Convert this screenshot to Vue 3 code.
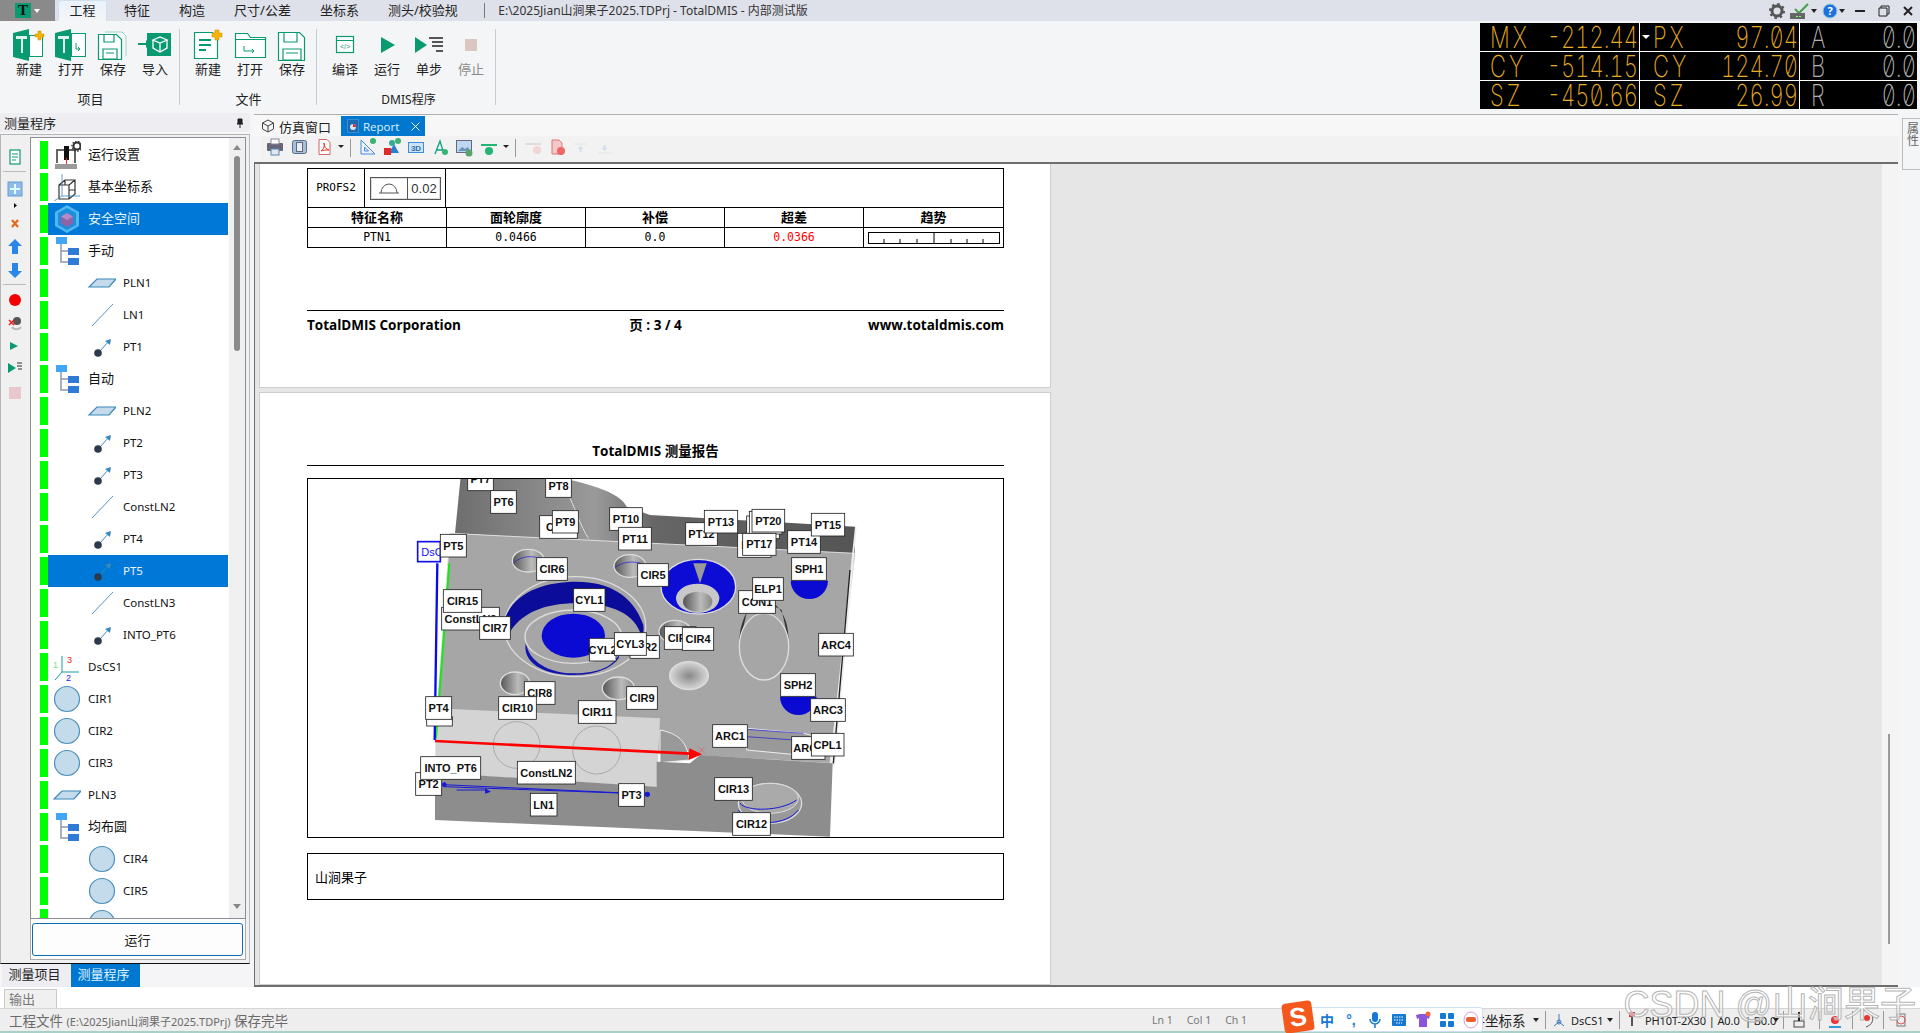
<template>
  <div class="app">
    <!-- title bar -->
    <header class="titlebar">
      <div class="appbtn">
        <span class="applogo">T</span>
        <span class="caret white"></span>
      </div>
      <nav class="menutabs">
        <span v-for="(t, i) in menuTabs" :key="t" class="menutab" :class="{ on: i === 0 }">{{ t }}</span>
      </nav>
      <div class="doctitle">E:\2025Jian山涧果子2025.TDPrj - TotalDMIS - 内部测试版</div>
      <div class="winbtns">
        <svg width="16" height="16" viewBox="0 0 16 16">
          <circle cx="8" cy="8" r="5" fill="none" stroke="#555" stroke-width="3" />
          <circle cx="8" cy="8" r="7" fill="none" stroke="#555" stroke-width="2" stroke-dasharray="2.5 3" />
        </svg>
        <svg width="22" height="18" viewBox="0 0 22 18" class="w-check">
          <path d="M6 7l4 4 9-9" fill="none" stroke="#43a047" stroke-width="2" />
          <rect x="1" y="11" width="15" height="6" fill="#666" />
          <rect x="7" y="14" width="2" height="1" fill="#7f7" />
          <rect x="10" y="14" width="2" height="1" fill="#7f7" />
        </svg>
        <span class="caret"></span>
        <svg width="16" height="16" viewBox="0 0 16 16" class="w-help">
          <circle cx="8" cy="8" r="7" fill="#1e6fe0" stroke="#9cc" />
          <text x="8" y="12" text-anchor="middle" font-size="11" font-weight="700" fill="#fff">?</text>
        </svg>
        <span class="caret w-c2"></span>
        <svg width="12" height="12" viewBox="0 0 12 12" class="w-min"><rect x="1" y="5" width="10" height="2" fill="#222" /></svg>
        <svg width="12" height="12" viewBox="0 0 12 12" class="w-max">
          <path d="M3 3V1h8v8H9M1 3h8v8H1z" fill="none" stroke="#222" />
        </svg>
        <svg width="12" height="12" viewBox="0 0 12 12" class="w-max"><path d="M2 2l8 8M10 2l-8 8" stroke="#222" stroke-width="2" /></svg>
      </div>
    </header>

    <!-- ribbon -->
    <section class="ribbon">
      <div v-for="g in ribbonGroups" :key="g.title" class="rb-group" :class="g.cls">
        <div class="rb-btns">
          <div v-for="b in g.items" :key="b.label + b.icon" class="rb-btn" :class="{ off: b.off }">
            <svg width="34" height="32" viewBox="0 0 34 32" v-html="ribbonIcons[b.icon]"></svg>
            <span>{{ b.label }}</span>
          </div>
        </div>
        <div class="rb-title">{{ g.title }}</div>
      </div>

      <div class="led">
        <div v-for="(row, r) in ledRows" :key="r" class="led-row">
          <div v-for="(c, i) in row" :key="c[0]" class="led-cell" :class="{ dim: i === 2, mid: i === 1, last: i === 2 }">
            <span class="led-label">{{ c[0] }}</span>
            <span class="led-value">{{ c[1] }}</span>
          </div>
        </div>
        <span class="led-tri"></span>
      </div>
    </section>

    <!-- middle -->
    <section class="middle">
      <aside class="leftpanel">
        <div class="lp-head">
          <span>测量程序</span>
          <svg width="10" height="10" viewBox="0 0 10 10"><path d="M3 1h4v4l1 1H2l1-1zM5 6v4" fill="#222" stroke="#222" /></svg>
        </div>
        <div class="lp-body">
          <svg class="strip" width="29" height="280" viewBox="1 135 29 280">
            <rect x="10" y="150" width="10" height="14" fill="#fff" stroke="#0a9a72" stroke-width="1.2" />
            <path d="M12 154h6M12 157h6M12 160h4" stroke="#0a9a72" />
            <path d="M3 171.5h23" stroke="#bbb" />
            <rect x="8" y="182" width="14" height="14" fill="#8fbbe8" stroke="#6a9bd0" />
            <path d="M15 184v10M10 189h10" stroke="#dff" stroke-width="2" />
            <path d="M14 203l3 2.500-3 2.500z" fill="#111" />
            <path d="M12 220l6 7M18 220l-6 7" stroke="#e8661a" stroke-width="2.200" />
            <path d="M15 239l7 7h-4v8h-6v-8H8z" fill="#2a86e8" />
            <path d="M15 278l7-7h-4v-8h-6v8H8z" fill="#2a86e8" />
            <path d="M3 284.500h23" stroke="#bbb" />
            <circle cx="15" cy="300" r="6" fill="#f40000" />
            <circle cx="17" cy="321" r="4" fill="#555" />
            <path d="M12 327a5 4 0 0 0 9 0" stroke="#bbb" stroke-width="2" fill="none" />
            <path d="M9 320l5 5M14 320l-5 5" stroke="#e22" stroke-width="1.600" />
            <path d="M10 342l8 4-8 4z" fill="#0a9a72" />
            <path d="M8 363l8 5-8 5z" fill="#0a9a72" />
            <path d="M17 363h5M17 366h5M18 369h4" stroke="#333" />
            <rect x="9" y="387" width="12" height="12" fill="#e8c8cc" />
          </svg>
          <div class="lp-right">
            <div class="tree">
              <div class="tree-rows">
                <div v-for="n in treeRows" :key="n.text" class="t-row" :class="{ sel: n.sel, child: n.lvl }">
                  <span class="t-state"></span>
                  <span class="t-main">
                    <svg class="t-icon" width="28" height="28" viewBox="0 0 28 28" v-html="treeIcons[n.icon]"></svg>
                    <span class="t-text" :class="isLatin(n.text) ? 'latin' : 'zh'">{{ n.text }}</span>
                  </span>
                </div>
              </div>
              <div class="tree-scroll">
                <span class="arr up"></span>
                <span class="thumb"></span>
                <span class="arr down"></span>
              </div>
            </div>
            <div class="runframe"><button class="runbtn">运行</button></div>
          </div>
        </div>
        <div class="lp-tabs">
          <span class="lp-tab">测量项目</span>
          <span class="lp-tab on">测量程序</span>
        </div>
      </aside>

      <main class="maincol">
        <div class="doctabs">
          <span class="doctab">
            <svg width="14" height="14" viewBox="0 0 14 14"><path d="M7 1l5.500 3v6L7 13l-5.500-3V4zM1.500 4L7 7l5.500-3M7 7v6" fill="none" stroke="#444" /></svg>
            仿真窗口
          </span>
          <span class="doctab on">
            <svg width="12" height="14" viewBox="0 0 12 14"><rect x=".5" y=".5" width="11" height="13" fill="#1c6bb0" stroke="#3a8ccc" /><circle cx="6" cy="8" r="3" fill="#d9e4ee" /><path d="M6 8V5a3 3 0 0 1 3 3z" fill="#e23" /></svg>
            Report
            <svg class="x" width="9" height="9" viewBox="0 0 9 9"><path d="M.5.500l8 8M8.500.500l-8 8" stroke="#fff" /></svg>
          </span>
        </div>
        <div class="doctools">
          <svg width="360" height="24" viewBox="262 138 360 24">
            <rect x="267" y="145" width="16" height="8" rx="1" fill="#667" />
            <rect x="271" y="141" width="8" height="5" fill="#fff" stroke="#889" />
            <rect x="271" y="151" width="8" height="6" fill="#dfe8f0" stroke="#5a87b0" />
            <rect x="292.500" y="142.500" width="14" height="13" rx="2" fill="#a9bfd8" stroke="#5a6f8a" />
            <rect x="296.500" y="144.500" width="6" height="9" fill="#e8eef5" stroke="#667" />
            <path d="M319 141.500h8l3 3v12h-11z" fill="#fff" stroke="#c66" />
            <path d="M321 153c3-2 4-6 3-8 0 4 2 6 5 7-3 0-6 0-8 1z" fill="none" stroke="#d32" />
            <path d="M338 147h6l-3 3z" fill="#222" />
            <path d="M350.500 141v18" stroke="#999" />
            <path d="M361 142v14h14zM364.500 149v4h4z" fill="none" stroke="#3c8ce0" />
            <circle cx="373" cy="143" r="3" fill="#3bb273" />
            <path d="M394 146l5 9h-10z" fill="#2a7fd0" />
            <rect x="384" y="150" width="7" height="7" fill="#e02a2a" />
            <circle cx="392" cy="145" r="3" fill="#3a9" />
            <circle cx="398" cy="143" r="3" fill="#3bb273" />
            <rect x="408.500" y="144.500" width="15" height="10" fill="#cfe3f3" stroke="#3c8ce0" />
            <text x="416" y="153" font-size="8" font-weight="700" fill="#2e6fb0" text-anchor="middle" font-family="Liberation Sans">3D</text>
            <path d="M435 156l5-13 4 13M437 152h5" fill="none" stroke="#0aa37f" stroke-width="1.300" />
            <circle cx="445" cy="154" r="3" fill="#3bb273" />
            <rect x="456.500" y="142.500" width="15" height="12" fill="#bcd7ee" stroke="#668" />
            <path d="M458 153l4-4 3 2 3-2 2 4z" fill="#6a93b8" />
            <circle cx="469" cy="155" r="3.500" fill="#5aa36d" />
            <path d="M481 147h16" stroke="#22b573" stroke-width="2" />
            <circle cx="489" cy="153" r="4" fill="#22b573" />
            <path d="M503 147h6l-3 3z" fill="#222" />
            <path d="M515.500 141v18" stroke="#999" />
            <path d="M525 146h16" stroke="#e0dcdc" stroke-width="2" />
            <circle cx="537" cy="152" r="4" fill="#f3d4d4" />
            <path d="M552 142h7l3 3v11h-10z" fill="#f4c9c9" stroke="#d77" />
            <circle cx="561" cy="153" r="4" fill="#e66" />
            <path d="M574 146h13" stroke="#e4e4e4" />
            <path d="M580.500 148l3 3h-2v3h-2v-3h-2z" fill="#d0dff0" />
            <path d="M598 155h14" stroke="#e4e4e4" />
            <path d="M604.500 153l3-3h-2v-3h-2v3h-2z" fill="#d0dff0" />
          </svg>
        </div>
        <div class="content">
          <div class="pages">
            <article class="page first">
              <div class="rtable">
                <div class="r-top">
                  <div class="r-name">PROFS2</div>
                  <div class="r-frame-cell">
                    <div class="r-frame">
                      <span class="r-sym">
                        <svg width="28" height="16" viewBox="0 0 28 16"><path d="M4 13h20M6 13a8 9 0 0 1 16 0" fill="none" stroke="#555" /></svg>
                      </span>
                      <span class="r-tol">0.02</span>
                    </div>
                  </div>
                </div>
                <div class="r-grid head">
                  <span v-for="h in reportHead" :key="h">{{ h }}</span>
                </div>
                <div class="r-grid data">
                  <span>PTN1</span>
                  <span>0.0466</span>
                  <span>0.0</span>
                  <span class="bad">0.0366</span>
                  <span class="trend">
                    <svg width="132" height="12" viewBox="0 0 132 12">
                      <rect x=".5" y=".5" width="131" height="11" fill="#fff" stroke="#000" />
                      <path d="M66 1v10M16 7v4M32 7v4M49 7v4M83 7v4M99 7v4M115 7v4" stroke="#000" />
                    </svg>
                  </span>
                </div>
              </div>
              <div class="r-foot">
                <span>TotalDMIS Corporation</span>
                <span class="pageno">页 : 3 / 4</span>
                <span>www.totaldmis.com</span>
              </div>
            </article>

            <article class="page second">
              <h2 class="r-title">TotalDMIS 测量报告</h2>
              <div class="shot">
                <svg width="694" height="358" viewBox="-276 27 2082 1074" class="shot-svg">
                  <defs>
                    <linearGradient id="wall" x1="0" x2="1" y1="0" y2="0">
                      <stop offset="0" stop-color="#6e6e6e" />
                      <stop offset=".35" stop-color="#9a9a9a" />
                      <stop offset=".5" stop-color="#666" />
                      <stop offset="1" stop-color="#555" />
                    </linearGradient>
                    <linearGradient id="hole" x1="0" x2="1" y1="0" y2="0">
                      <stop offset="0" stop-color="#555" />
                      <stop offset=".6" stop-color="#bbb" />
                      <stop offset="1" stop-color="#888" />
                    </linearGradient>
                    <radialGradient id="dimple">
                      <stop offset="0" stop-color="#888" />
                      <stop offset="1" stop-color="#d8d8d8" />
                    </radialGradient>
                  </defs>
                  <!-- back wall -->
                  <path d="M182 20h280c110 20 200 50 218 90l70 25 615 35v90L165 190z" fill="url(#wall)" />
                  <path d="M510 85c20 40 30 80 55 120" fill="none" stroke="#ddd" stroke-width="3" />
                  <!-- top plate -->
                  <path d="M150 190l1215 60-75 630-1185-70z" fill="#a6a6a6" stroke="#ddd" stroke-width="3" />
                  <path d="M1365 170l-75 710 15 10 65-720z" fill="#eee" />
                  <path d="M1350 300l-50 580" stroke="#222" stroke-width="4" />
                  <!-- light step -->
                  <path d="M108 715l672 30-10 205-665-40z" fill="#d4d4d4" />
                  <ellipse cx="350" cy="825" rx="70" ry="70" fill="none" stroke="#aaa" stroke-width="3" />
                  <ellipse cx="590" cy="840" rx="72" ry="72" fill="none" stroke="#aaa" stroke-width="3" />
                  <path d="M780 780c50 10 80 30 88 90l-88 8z" fill="#999" stroke="#eee" stroke-width="3" />
                  <!-- lower block -->
                  <path d="M105 908l665 42 0-75 100 5 30-25 398 25-8 220-1185-50z" fill="#8d8d8d" />
                  <!-- top holes -->
                  <ellipse cx="385" cy="272" rx="48" ry="34" fill="url(#hole)" stroke="#ddd" stroke-width="4" />
                  <path d="M340 280c20-20 50-25 80-15" fill="none" stroke="#1818d8" stroke-width="2" />
                  <ellipse cx="690" cy="288" rx="48" ry="34" fill="url(#hole)" stroke="#ddd" stroke-width="4" />
                  <path d="M645 292c20-15 50-20 80-12" fill="none" stroke="#1818d8" stroke-width="2" />
                  <ellipse cx="345" cy="640" rx="44" ry="34" fill="url(#hole)" stroke="#ddd" stroke-width="4" />
                  <ellipse cx="655" cy="655" rx="48" ry="34" fill="url(#hole)" stroke="#ddd" stroke-width="4" />
                  <ellipse cx="825" cy="485" rx="48" ry="34" fill="url(#hole)" stroke="#ddd" stroke-width="4" />
                  <!-- big counterbore -->
                  <ellipse cx="525" cy="470" rx="212" ry="150" fill="#a6a6a6" stroke="#ddd" stroke-width="4" />
                  <path d="M315 445c30-80 120-110 215-110s170 40 200 130c2 20 0 30-5 35-20-70-90-100-195-100-100 0-170 30-205 95z" fill="#0c0c9a" />
                  <path d="M378 515c5 60 70 95 145 95 70 0 120-20 135-60l-2 15c-25 35-80 50-135 50-80 0-145-30-145-85z" fill="#1212b0" />
                  <ellipse cx="520" cy="500" rx="145" ry="80" fill="#a6a6a6" stroke="#ddd" stroke-width="4" />
                  <ellipse cx="520" cy="497" rx="95" ry="66" fill="#0a0ad2" />
                  <!-- cone -->
                  <ellipse cx="895" cy="350" rx="112" ry="82" fill="#0c0cd4" stroke="#ddd" stroke-width="4" />
                  <path d="M880 280l40 0-20 60z" fill="#9a9a9a" />
                  <ellipse cx="893" cy="385" rx="65" ry="44" fill="#c8c8c8" />
                  <ellipse cx="893" cy="395" rx="44" ry="30" fill="url(#hole)" />
                  <!-- slot -->
                  <path d="M1018 520c0-80 40-130 75-130s75 50 72 120l-20-90c-30-20-80-20-105 10z" fill="#333" />
                  <ellipse cx="1092" cy="530" rx="74" ry="100" fill="#a6a6a6" stroke="#ddd" stroke-width="4" />
                  <ellipse cx="867" cy="617" rx="58" ry="42" fill="url(#dimple)" stroke="#ddd" stroke-width="4" />
                  <path d="M1172 332h112c0 30-25 55-56 55s-56-25-56-55z" fill="#0a0ad2" />
                  <path d="M1140 680h110c0 30-25 55-55 55s-55-25-55-55z" fill="#0a0ad2" />
                  <!-- lower counterbores -->
                  <ellipse cx="1110" cy="1000" rx="95" ry="60" fill="#999" stroke="#ddd" stroke-width="4" />
                  <ellipse cx="1110" cy="985" rx="85" ry="45" fill="#aaa" stroke="#ddd" stroke-width="3" />
                  <path d="M1020 1000c20 25 120 25 170-10M1015 1020c40 50 140 50 180 0" fill="none" stroke="#1818d8" stroke-width="3" />
                  <path d="M1040 775l170 15 40 10v60l-210-20z" fill="#999" stroke="#eee" stroke-width="3" />
                  <path d="M1040 778l170 12M1040 800l170 12" stroke="#1818d8" stroke-width="2" />
                  <!-- axes and scan lines -->
                  <path d="M148 280L108 805" stroke="#18e818" stroke-width="6" />
                  <path d="M112 280L104 810" stroke="#0a0af0" stroke-width="7" />
                  <path d="M105 813L870 851" stroke="#f00" stroke-width="8" />
                  <path d="M868 835l38 18-40 17z" fill="#f00" />
                  <path d="M895 830l20 20M915 830l-20 20" stroke="#e55" stroke-width="2" />
                  <path d="M130 944l610 28M130 950l610 22M170 960h90" stroke="#1818d8" stroke-width="3" />
                  <circle cx="133" cy="944" r="7" fill="#1818d8" />
                  <circle cx="742" cy="973" r="8" fill="#1818d8" />
                  <path d="M255 955l18 10-18 6z" fill="#1818d8" />
                  <!-- labels -->
                  <g v-for="l in shotLabels" :key="l[0] + l[1]">
                    <rect :x="l[1]" :y="l[2]" :width="l[3]" :height="l[4]" fill="#fff" stroke="#222" stroke-width="2.500" />
                    <text :x="l[1] + l[3] / 2" :y="l[2] + l[4] / 2 + 12" text-anchor="middle" class="shot-label">{{ l[0] }}</text>
                  </g>
                  <rect x="53" y="215" width="68" height="60" fill="#fff" stroke="#1010f0" stroke-width="5" />
                  <text x="64" y="258" class="shot-label blue">DsC</text>
                  <rect x="121" y="193" width="78" height="68" fill="#fff" stroke="#222" stroke-width="2.500" />
                  <text x="160" y="239" text-anchor="middle" class="shot-label">PT5</text>
                </svg>
              </div>
              <div class="r-note">山涧果子</div>
            </article>
          </div>
          <div class="greyfill"></div>
          <div class="vscroll"><span></span></div>
        </div>
      </main>

      <div class="rightstrip"><span>属性</span></div>
    </section>

    <!-- output row + status -->
    <div class="outrow"><span class="outtab">输出</span></div>
    <footer class="status">
      <div class="st-msg">工程文件 <small>(E:\2025Jian山涧果子2025.TDPrj)</small> 保存完毕</div>
      <div class="st-pos"><span>Ln 1</span><span>Col 1</span><span>Ch 1</span></div>
      <div class="st-right">
        <span class="st-cs">工件坐标系</span>
        <span class="caret m7"></span>
        <i class="st-sep m6"></i>
        <svg class="m6" width="14" height="16" viewBox="0 0 14 16"><path d="M7 2v8M7 10L2 14M7 10l5 4" stroke="#3c78b8" fill="none" /><circle cx="7" cy="10" r="2" fill="none" stroke="#3c78b8" /></svg>
        <span class="st-t st-cs1 m5">DsCS1</span>
        <span class="caret m5"></span>
        <i class="st-sep m6"></i>
        <svg class="m7" width="10" height="18" viewBox="0 0 10 18"><rect x="2" y="1" width="6" height="5" fill="#c33" /><path d="M5 6v9" stroke="#555" stroke-width="2" /></svg>
        <span class="st-t st-probe m8">PH10T-2X30 | A0.0 &nbsp;| B0.0</span>
        <span class="caret m4"></span>
        <i class="st-sep m4"></i>
        <svg class="m8" width="14" height="18" viewBox="0 0 14 18"><rect x="2" y="10" width="10" height="6" fill="none" stroke="#444" /><path d="M7 1v9" stroke="#222" stroke-width="2" /></svg>
        <i class="st-sep m13"></i>
        <svg class="m8" width="14" height="18" viewBox="0 0 14 18"><circle cx="7" cy="9" r="4" fill="#e33" /><path d="M1 16h12" stroke="#39d" stroke-width="2" /></svg>
        <i class="st-sep m10"></i>
        <svg class="m8" width="14" height="18" viewBox="0 0 14 18"><circle cx="6" cy="7" r="3" fill="#e33" /><path d="M11 4c2 5 0 10-6 12" stroke="#555" fill="none" /></svg>
        <i class="st-sep m8"></i>
        <svg class="m10" width="14" height="18" viewBox="0 0 14 18"><rect x="3" y="3" width="8" height="12" fill="none" stroke="#777" /><circle cx="7" cy="9" r="4" fill="none" stroke="#d55" /></svg>
      </div>
    </footer>

    <!-- floating input method bar -->
    <div class="ime">
      <span class="ime-logo">S</span>
      <span class="ime-zh">中</span>
      <span class="ime-punc">°,</span>
      <svg width="12" height="18" viewBox="0 0 12 18"><rect x="3" y="1" width="6" height="10" rx="3" fill="#1478d4" /><path d="M1 8a5 5 0 0 0 10 0M6 13v4" fill="none" stroke="#1478d4" stroke-width="1.500" /></svg>
      <svg width="14" height="14" viewBox="0 0 14 14"><rect width="14" height="12" y="1" rx="1" fill="#1478d4" /><path d="M2 4h10M2 7h10M4 10h6" stroke="#fff" stroke-dasharray="1.500 1" /></svg>
      <svg width="16" height="18" viewBox="0 0 16 18"><path d="M1 4l4-1h6l4 1-1 4-2-1v9H4V7L2 8z" fill="#8a55d8" /><circle cx="13" cy="3" r="2.500" fill="#f2643c" /></svg>
      <svg width="14" height="14" viewBox="0 0 14 14"><rect width="6" height="6" rx="1" fill="#1478d4" /><rect x="8" width="6" height="6" rx="1" fill="#1478d4" /><rect y="8" width="6" height="6" rx="1" fill="#1478d4" /><rect x="8" y="8" width="6" height="6" rx="1" fill="#1478d4" /></svg>
      <svg width="16" height="20" viewBox="0 0 16 20"><ellipse cx="8" cy="10" rx="7" ry="8" fill="#fff" stroke="#d99ae0" /><rect x="3" y="7" width="10" height="5" rx="2" fill="#e8602c" /></svg>
    </div>

    <div class="watermark">CSDN @山涧果子</div>
  </div>
</template>

<script setup>
const menuTabs = ["工程", "特征", "构造", "尺寸/公差", "坐标系", "测头/校验规"];

const ribbonGroups = [
  {
    title: "项目",
    cls: "g1",
    items: [
      { label: "新建", icon: "projNew" },
      { label: "打开", icon: "projOpen" },
      { label: "保存", icon: "saveAll" },
      { label: "导入", icon: "import" },
    ],
  },
  {
    title: "文件",
    cls: "g2",
    items: [
      { label: "新建", icon: "fileNew" },
      { label: "打开", icon: "fileOpen" },
      { label: "保存", icon: "fileSave" },
    ],
  },
  {
    title: "DMIS程序",
    cls: "g3",
    items: [
      { label: "编译", icon: "compile" },
      { label: "运行", icon: "run" },
      { label: "单步", icon: "step" },
      { label: "停止", icon: "stop", off: true },
    ],
  },
];

const G = "#0a9a72";
const tBook =
  `<path d="M1 4L17 0v32L1 28z" fill="${G}"/>` +
  `<path d="M4 7h11v3h-4v14H9V10H4z" fill="#dff3ec"/>`;

const ribbonIcons = {
  projNew:
    tBook +
    `<rect x="17.500" y="6.500" width="13" height="21" fill="#fff" stroke="${G}"/>` +
    `<path d="M26 2h3v3h3v3h-3v3h-3V8h-3V5h3z" fill="#f4b400" stroke="#c98a00" stroke-width=".5"/>`,
  projOpen:
    tBook +
    `<rect x="17.500" y="4.500" width="14" height="23" fill="#fff" stroke="${G}"/>` +
    `<path d="M22 14v6h4M24 18l2 2-2 2" fill="none" stroke="${G}"/>`,
  saveAll:
    `<path d="M9 3h17l4 4v20" fill="none" stroke="#9fd8c6"/>` +
    `<path d="M2.500 5.500h18l5 5v20h-23z" fill="#fff" stroke="${G}" stroke-width="1.200"/>` +
    `<path d="M8 6v7h10V6M7 20h14v10H7zM10 24h8" fill="none" stroke="${G}" stroke-width="1.200"/>`,
  import:
    `<path d="M0 15h8" stroke="${G}" stroke-width="2"/><path d="M8 11l5 4-5 4z" fill="${G}"/>` +
    `<rect x="9" y="4" width="24" height="23" fill="${G}"/>` +
    `<path d="M15 11l7-3 7 3-7 3zM15 11v8l7 4 7-4v-8M22 14v9" fill="none" stroke="#fff" stroke-width="1.300"/>`,
  fileNew:
    `<path d="M3.500 3.500h18l5 5v21h-23z" fill="#fff" stroke="${G}" stroke-width="1.200"/>` +
    `<path d="M8 11h12M8 16h12M8 21h7" stroke="${G}" stroke-width="2"/>` +
    `<path d="M24 1h4v3h3v4h-3v3h-4V8h-3V4h3z" fill="#f4b400" stroke="#c98a00" stroke-width=".5"/>`,
  fileOpen:
    `<path d="M2.500 28.500V4.500h12l3 4h15v20z" fill="#fff" stroke="${G}" stroke-width="1.200"/>` +
    `<path d="M2.500 10.500h30" stroke="${G}"/><path d="M11 17v5h10M19 20l2 2-2 2" fill="none" stroke="${G}"/>`,
  fileSave:
    `<path d="M3.500 3.500h21l5 5v23h-26z" fill="#fff" stroke="${G}" stroke-width="1.200"/>` +
    `<path d="M9 4v9h13V4M8 20h18v11H8zM11 24h12" fill="none" stroke="${G}" stroke-width="1.200"/>`,
  compile:
    `<rect x="8.500" y="7.500" width="17" height="16" fill="#fff" stroke="${G}" stroke-width="1.200"/>` +
    `<path d="M8.500 11.500h17" stroke="${G}"/>` +
    `<text x="17" y="20" font-size="7" text-anchor="middle" fill="${G}" font-family="Liberation Sans">&lt;/&gt;</text>`,
  run: `<path d="M11 8l14 8-14 8z" fill="${G}"/>`,
  step:
    `<path d="M3 8l12 8-12 8z" fill="${G}"/>` +
    `<path d="M17 9h14M20 13h11M20 17h11M24 22h7" stroke="#555" stroke-width="1.800"/>`,
  stop: `<rect x="11" y="10" width="12" height="12" fill="#dcc6c4"/>`,
};

const T = "#3b88b9";
const treeIcons = {
  settings:
    `<path d="M3 8h20v14H21V10H5v12H3z" fill="#666"/><rect x="11" y="5" width="5" height="14" fill="#111"/>` +
    `<path d="M13.500 17v6" stroke="#e33"/><rect x="2" y="23" width="22" height="5" fill="#999"/>` +
    `<circle cx="24" cy="5" r="3.500" fill="none" stroke="#333" stroke-width="2"/><circle cx="24" cy="5" r="5" fill="none" stroke="#333" stroke-width="1.500" stroke-dasharray="1.500 1.500"/>`,
  base:
    `<path d="M6 12l6-5h10v14l-6 5H6zM6 12h10v14M16 12l6-5M12 7v5" fill="none" stroke="#333" stroke-width="1.200"/>` +
    `<path d="M16 17h6" stroke="#333"/><path d="M9 1v22L1 28M9 23h18" fill="none" stroke="${T}" stroke-width=".8"/>`,
  safe:
    `<path d="M14 0l12 7v14l-12 7-12-7V7z" fill="#4fb8f0"/><path d="M14 3l9 5v12l-9 5-9-5V8z" fill="#1c8edc"/>` +
    `<path d="M14 8l6 3.500v7L14 22l-6-3.500v-7z" fill="#8e63a8"/><path d="M14 8l6 3.500-6 3.500-6-3.500z" fill="#b58ac9"/>`,
  group:
    `<rect x="3" y="0" width="11" height="7" fill="#42a5f5"/><path d="M8 7v18h7M8 14h7" fill="none" stroke="#8d99a6" stroke-width="1.500"/>` +
    `<rect x="15" y="11" width="11" height="7" fill="#2f7ad6"/><rect x="15" y="21" width="11" height="7" fill="#2f7ad6"/>`,
  plane: `<path d="M1 18l8-8h19l-7 8z" fill="#c3dbea" stroke="${T}" stroke-width="1.200"/>`,
  line: `<path d="M4 25L25 3" stroke="${T}" stroke-width=".9"/>`,
  point:
    `<path d="M11 19L21 8" stroke="${T}" stroke-width="1"/><path d="M23 6l-1 6-5-4z" fill="${T}"/>` +
    `<circle cx="10" cy="20" r="3.800" fill="#2b3a4a"/>`,
  dcs:
    `<path d="M9 3v16M9 19h17M9 19l-7 8" stroke="#1a9a9a" fill="none"/>` +
    `<text x="14" y="10" font-size="9" fill="#e22" font-family="Liberation Sans">3</text>` +
    `<text x="0" y="15" font-size="9" fill="#7de07d" font-family="Liberation Sans">1</text>` +
    `<text x="13" y="28" font-size="9" fill="#22d" font-family="Liberation Sans">2</text>`,
  circle: `<circle cx="14" cy="14" r="12.500" fill="#c3dbea" stroke="#4a8fbe" stroke-width="1.200"/>`,
};

const treeRows = [
  { text: "运行设置", icon: "settings" },
  { text: "基本坐标系", icon: "base" },
  { text: "安全空间", icon: "safe", sel: true },
  { text: "手动", icon: "group" },
  { text: "PLN1", icon: "plane", lvl: 1 },
  { text: "LN1", icon: "line", lvl: 1 },
  { text: "PT1", icon: "point", lvl: 1 },
  { text: "自动", icon: "group" },
  { text: "PLN2", icon: "plane", lvl: 1 },
  { text: "PT2", icon: "point", lvl: 1 },
  { text: "PT3", icon: "point", lvl: 1 },
  { text: "ConstLN2", icon: "line", lvl: 1 },
  { text: "PT4", icon: "point", lvl: 1 },
  { text: "PT5", icon: "point", lvl: 1, sel: true },
  { text: "ConstLN3", icon: "line", lvl: 1 },
  { text: "INTO_PT6", icon: "point", lvl: 1 },
  { text: "DsCS1", icon: "dcs" },
  { text: "CIR1", icon: "circle" },
  { text: "CIR2", icon: "circle" },
  { text: "CIR3", icon: "circle" },
  { text: "PLN3", icon: "plane" },
  { text: "均布圆", icon: "group" },
  { text: "CIR4", icon: "circle", lvl: 1 },
  { text: "CIR5", icon: "circle", lvl: 1 },
  { text: "CIR6", icon: "circle", lvl: 1 },
];

const isLatin = (s) => /^[A-Za-z]/.test(s);

const ledRows = [
  [["MX", "-212.44"], ["PX", "97.04"], ["A", "0.0"]],
  [["CY", "-514.15"], ["CY", "124.70"], ["B", "0.0"]],
  [["SZ", "-450.66"], ["SZ", "26.99"], ["R", "0.0"]],
];

const reportHead = ["特征名称", "面轮廓度", "补偿", "超差", "趋势"];

// name, x, y, w, h in the drawing's own units, back to front
const shotLabels = [
  ["PT7", 203, -6, 77, 68],
  ["PT6", 272, 62, 77, 68],
  ["PT8", 437, 15, 77, 67],
  ["CIR1", 419, 137, 113, 68],
  ["PT9", 457, 122, 78, 67],
  ["PT10", 629, 113, 98, 68],
  ["PT11", 656, 172, 98, 68],
  ["PT12", 857, 158, 95, 68],
  ["PT13", 913, 121, 100, 68],
  ["PT18", 1040, 138, 98, 68],
  ["PT19", 1048, 124, 98, 68],
  ["PT20", 1056, 118, 98, 68],
  ["PT16", 1013, 190, 100, 72],
  ["PT17", 1028, 190, 100, 66],
  ["PT14", 1163, 182, 98, 68],
  ["PT15", 1234, 130, 100, 68],
  ["SPH1", 1175, 263, 104, 68],
  ["CIR6", 410, 263, 92, 68],
  ["CIR5", 713, 281, 92, 68],
  ["CYL1", 521, 356, 94, 68],
  ["CON1", 1016, 362, 110, 68],
  ["ELP1", 1058, 323, 92, 68],
  ["ConstLN3", 125, 412, 173, 68],
  ["CIR15", 130, 359, 115, 68],
  ["CIR7", 239, 440, 92, 68],
  ["CIR3", 793, 470, 95, 68],
  ["CIR4", 847, 473, 94, 68],
  ["CYL2", 568, 505, 80, 68],
  ["CIR2", 690, 497, 88, 68],
  ["CYL3", 643, 488, 96, 68],
  ["ARC4", 1256, 490, 104, 68],
  ["SPH2", 1142, 611, 104, 68],
  ["ARC3", 1232, 686, 104, 68],
  ["CIR8", 373, 635, 92, 68],
  ["CIR9", 680, 650, 92, 68],
  ["CIR10", 296, 680, 113, 68],
  ["CIR11", 535, 692, 113, 68],
  ["", 80, 740, 77, 28],
  ["PT4", 77, 680, 78, 68],
  ["ARC1", 938, 764, 104, 68],
  ["ARC2", 1175, 800, 100, 68],
  ["CPL1", 1234, 790, 98, 68],
  ["PT2", 47, 908, 78, 68],
  ["INTO_PT6", 62, 860, 180, 68],
  ["ConstLN2", 352, 874, 174, 68],
  ["PT3", 656, 941, 77, 68],
  ["LN1", 391, 970, 80, 68],
  ["CIR12", 998, 1028, 113, 68],
  ["CIR13", 944, 923, 113, 68],
];
</script>

<style>
html,
body {
  margin: 0;
  overflow: hidden;
  background: #fff;
}
</style>

<style scoped>
.app {
  position: relative;
  width: 1920px;
  height: 1033px;
  display: flex;
  flex-direction: column;
  overflow: hidden;
  background: #f4f5f7;
  color: #222;
  font-family: "Noto Sans", "Noto Sans CJK SC", sans-serif;
  font-size: 13px;
}

/* title bar */
.titlebar {
  height: 21px;
  flex: none;
  display: flex;
  align-items: center;
  background: #dfe1ea;
}
.appbtn {
  width: 55px;
  height: 21px;
  background: #8a8a8a;
  display: flex;
  align-items: center;
  padding-left: 15px;
  box-sizing: border-box;
  gap: 3px;
}
.applogo {
  width: 16px;
  height: 15px;
  background: #0a9a72;
  color: #111;
  font: 700 15px/15px "Liberation Serif", serif;
  text-align: center;
}
.caret {
  flex: none;
  width: 0;
  height: 0;
  border: 3.500px solid transparent;
  border-top: 4px solid #222;
  border-bottom: 0;
}
.caret.white {
  border-top-color: #fff;
}
.menutabs {
  display: flex;
  height: 21px;
  margin-left: 3px;
}
.menutab {
  padding: 0 14.500px;
  line-height: 21px;
  white-space: nowrap;
}
.menutab.on {
  padding: 0 11.500px;
  margin-right: 2.500px;
  background: linear-gradient(#e9f2fb, #f4f5f7);
  border-radius: 3px 3px 0 0;
  box-shadow: inset 1px 1px 0 #cfe0f0, inset -1px 0 0 #cfe0f0;
}
.doctitle {
  margin-left: 12px;
  padding-left: 13px;
  border-left: 1px solid #777;
  font-size: 12px;
  line-height: 15px;
  color: #333;
  white-space: nowrap;
}
.winbtns {
  margin-left: auto;
  display: flex;
  align-items: center;
  height: 21px;
  padding-right: 6px;
}
.w-check {
  margin-left: 4px;
}
.w-help {
  margin-left: 5px;
}
.w-c2 {
  margin-left: 1px;
}
.w-min {
  margin-left: 9px;
}
.w-max {
  margin-left: 12px;
}

/* ribbon */
.ribbon {
  height: 92px;
  flex: none;
  display: flex;
  align-items: flex-start;
  box-sizing: border-box;
  padding-top: 8px;
}
.rb-group {
  border-right: 1px solid #c3ccd6;
  height: 76px;
  box-sizing: border-box;
}
.rb-group.g1 {
  margin-left: 8px;
  width: 172px;
}
.rb-group.g2 {
  width: 137px;
  padding-left: 7px;
}
.rb-group.g3 {
  width: 179px;
  padding-left: 7px;
}
.rb-btns {
  display: flex;
  height: 62px;
}
.rb-btn {
  width: 42px;
  display: flex;
  flex-direction: column;
  align-items: center;
  font-size: 13px;
  line-height: 17px;
  color: #222;
}
.rb-btn svg {
  flex: none;
}
.rb-btn.off {
  color: #8a8a8a;
}
.rb-title {
  height: 14px;
  line-height: 17px;
  text-align: center;
  font-size: 13px;
  padding-right: 6px;
}
.g3 .rb-title {
  font-size: 12px;
  padding-right: 2px;
}

/* led readout */
.led {
  position: relative;
  margin: -6px 3px 0 auto;
  width: 437px;
  height: 86px;
  display: flex;
  flex-direction: column;
  gap: 1px;
  background: #fff;
  font-family: Inter, "Liberation Mono", monospace;
  font-weight: 200;
  font-variant-numeric: slashed-zero tabular-nums;
  color: #e6ad22;
}
.led-row {
  flex: 1;
  display: flex;
  gap: 1px;
}
.led-cell {
  width: 159px;
  background: #000;
  display: flex;
  justify-content: space-between;
  align-items: center;
  padding: 0 1px 0 10px;
  box-sizing: border-box;
  font-size: 22px;
}
.led-cell.mid {
  padding-left: 13px;
}
.led-cell.last {
  flex: 1;
  padding-left: 11px;
}
.led-cell.dim {
  color: #b4b4b4;
}
.led-label,
.led-value {
  display: inline-block;
  transform: scaleY(1.38);
  line-height: 1;
}
.led-label {
  letter-spacing: 3px;
}
.led-tri {
  position: absolute;
  left: 162px;
  top: 12px;
  border: 4px solid transparent;
  border-top: 4px solid #fff;
  border-bottom: 0;
}

/* middle */
.middle {
  height: 874px;
  flex: none;
  display: flex;
}
.leftpanel {
  width: 250px;
  flex: none;
  display: flex;
  flex-direction: column;
}
.lp-head {
  height: 19px;
  margin-bottom: 2px;
  background: #eeeef2;
  display: flex;
  align-items: center;
  justify-content: space-between;
  padding: 0 5px 0 4px;
  font-size: 13px;
}
.lp-body {
  height: 828px;
  display: flex;
  border: 1px solid #b5b5b5;
  border-bottom: 1px solid #111;
  border-right-color: #bbb;
  box-sizing: content-box;
  width: 248px;
  background: #f0f0f0;
}
.strip {
  flex: none;
  display: block;
  align-self: flex-start;
}
.lp-right {
  width: 216px;
  display: flex;
  flex-direction: column;
  padding-top: 2px;
}
.tree {
  height: 782px;
  flex: none;
  box-sizing: border-box;
  border: 1px solid #8a8f96;
  background: #fff;
  display: flex;
  overflow: hidden;
}
.tree-rows {
  width: 197px;
  padding: 1px 0 0 9px;
  box-sizing: border-box;
  flex: none;
}
.t-row {
  height: 32px;
  display: flex;
  align-items: center;
}
.t-state {
  width: 8px;
  height: 28px;
  background: #00ff00;
  flex: none;
}
.t-main {
  width: 180px;
  height: 32px;
  display: flex;
  align-items: center;
  padding-left: 5px;
  box-sizing: border-box;
}
.t-row.child .t-main {
  padding-left: 40px;
}
.t-row.sel .t-main {
  background: #0078d7;
  color: #fff;
}
.t-text {
  margin-left: 7px;
  font-size: 13px;
  color: #111;
  white-space: nowrap;
}
.t-text.zh {
  margin-bottom: 4px;
}
.t-text.latin {
  font-size: 11.500px;
  margin-bottom: 1px;
}
.t-row.sel .t-text {
  color: #e8f4ff;
}
.t-icon {
  flex: none;
}
.tree-scroll {
  width: 16px;
  margin-left: 1px;
  background: #f0f0f0;
  display: flex;
  flex-direction: column;
  align-items: center;
  position: relative;
}
.arr {
  position: absolute;
  border: 4px solid transparent;
}
.arr.up {
  top: 3px;
  border-bottom: 5px solid #888;
}
.arr.down {
  bottom: 5px;
  border-top: 5px solid #888;
}
.thumb {
  width: 6px;
  height: 195px;
  margin-top: 18px;
  border-radius: 3px;
  background: #8a8a8a;
}
.runframe {
  height: 41px;
  box-sizing: border-box;
  padding: 4px 2px 3px 1px;
  border: 1px solid #aaa;
  border-top: 0;
  background: #fcfcfc;
}
.runbtn {
  width: 100%;
  height: 33px;
  border: 1px solid #0b6cb8;
  border-radius: 3px;
  background: #fdfdfd;
  font: 13px "Noto Sans CJK SC", sans-serif;
  color: #222;
}
.lp-tabs {
  height: 23px;
  display: flex;
  padding-left: 2px;
  background: #f5f5f8;
}
.lp-tab {
  width: 69px;
  line-height: 21px;
  text-align: center;
  box-sizing: border-box;
  padding-right: 4px;
  font-size: 13px;
  background: #eeeef2;
}
.lp-tab.on {
  background: #0078d0;
  color: #dff1ff;
}

/* main */
.maincol {
  width: 1644px;
  margin-left: 4px;
  flex: none;
  display: flex;
  flex-direction: column;
}
.doctabs {
  margin-top: 1px;
  height: 22px;
  flex: none;
  border-top: 1px solid #b0b0b0;
  box-sizing: border-box;
  display: flex;
  background: #f7f7f7;
  padding-top: 1px;
}
.doctab {
  display: flex;
  align-items: center;
  gap: 4px;
  padding-left: 7px;
  width: 87px;
  box-sizing: border-box;
  font-size: 13px;
}
.doctab.on {
  width: 84px;
  background: #0078d0;
  color: #dff1ff;
  font-family: "Open Sans", sans-serif;
  font-size: 11.500px;
  padding-left: 6px;
}
.doctab .x {
  margin-left: 8px;
}
.doctools {
  height: 26px;
  flex: none;
  margin-left: 8px;
  background: #f2f2f2;
  overflow: hidden;
}
.doctools svg {
  display: block;
}
.content {
  flex: 1;
  min-height: 0;
  display: flex;
  border: 1px solid #6e6e6e;
  border-width: 2px 0 2px 1px;
  background: #e6e6e6;
  box-sizing: border-box;
}
.pages {
  width: 792px;
  margin-left: 4px;
  display: flex;
  flex-direction: column;
  gap: 4px;
  flex: none;
  overflow: hidden;
}
.page {
  background: #fff;
  border: 1px solid #cdcdcd;
  padding-left: 47px;
  padding-right: 46px;
  flex: none;
  box-sizing: border-box;
}
.page.first {
  height: 224px;
  padding-top: 4px;
  border-top: 0;
}
.page.second {
  flex: 1;
  min-height: 0;
  overflow: hidden;
  padding-top: 48px;
}
.greyfill {
  flex: 1;
}
.vscroll {
  width: 16px;
  flex: none;
  background: #f4f4f4;
  position: relative;
}
.vscroll span {
  position: absolute;
  left: 6px;
  top: 570px;
  width: 2px;
  height: 210px;
  background: #9a9a9a;
}

/* report */
.rtable {
  border: 1px solid #000;
  border-bottom: 0;
  color: #000;
}
.r-top {
  height: 38px;
  display: flex;
}
.r-name {
  width: 57px;
  border-right: 1px solid #000;
  box-sizing: border-box;
  text-align: center;
  font: 11px/38px "DejaVu Sans Mono", monospace;
}
.r-frame-cell {
  width: 81px;
  border-right: 1px solid #000;
  box-sizing: border-box;
  display: flex;
  align-items: center;
  padding-left: 5px;
}
.r-frame {
  width: 71px;
  height: 23px;
  border: 1px solid #555;
  box-sizing: border-box;
  display: flex;
  box-shadow: inset 0 0 0 1px #ddd;
}
.r-sym {
  width: 36px;
  border-right: 1px solid #555;
  display: flex;
  align-items: center;
  justify-content: center;
}
.r-tol {
  flex: 1;
  text-align: center;
  font: 13px/21px "Liberation Sans", sans-serif;
  color: #333;
}
.r-grid {
  display: grid;
  grid-template-columns: 139px 139px 139px 139px 1fr;
  height: 20px;
  border-top: 1px solid #000;
  box-sizing: border-box;
}
.r-grid.data {
  border-bottom: 1px solid #000;
  height: 21px;
}
.r-grid > span {
  border-right: 1px solid #000;
  text-align: center;
  line-height: 19px;
  font-family: "DejaVu Sans Mono", monospace;
  font-size: 11.500px;
}
.r-grid > span:last-child {
  border-right: 0;
}
.r-grid.head > span {
  font: 700 13px/18px "Noto Sans CJK SC", sans-serif;
}
.r-grid .bad {
  color: #ff0000;
}
.trend {
  display: flex;
  align-items: center;
  justify-content: center;
}
.r-foot {
  margin-top: 62px;
  border-top: 1px solid #000;
  padding-top: 4px;
  display: flex;
  justify-content: space-between;
  font: 700 13.500px/20px "Open Sans", "Noto Sans CJK SC", sans-serif;
  color: #000;
}
.pageno {
  margin-right: 18px;
}
.r-title {
  margin: 0;
  height: 24px;
  border-bottom: 1px solid #000;
  text-align: center;
  font: 700 13.500px/20px "Open Sans", "Noto Sans CJK SC", sans-serif;
  color: #000;
}
.shot {
  margin-top: 12px;
  height: 360px;
  border: 1px solid #000;
  box-sizing: border-box;
  background: #fff;
  overflow: hidden;
}
.shot-svg {
  display: block;
}
.shot-label {
  font: 700 33px "Liberation Sans", sans-serif;
  fill: #111;
}
.shot-label.blue {
  fill: #1010f0;
  font-weight: 400;
}
.r-note {
  margin-top: 15px;
  height: 47px;
  border: 1px solid #000;
  box-sizing: border-box;
  padding-left: 7px;
  font: 13px/45px "Noto Sans CJK SC", sans-serif;
  color: #000;
}

.rightstrip {
  width: 18px;
  margin: 5px 0 0 4px;
  height: 52px;
  border: 1px solid #bdbdbd;
  border-right: 0;
  box-sizing: border-box;
  background: #f4f5f7;
  display: flex;
  justify-content: center;
  padding-top: 3px;
}
.rightstrip span {
  writing-mode: vertical-rl;
  font-size: 12px;
  line-height: 14px;
  color: #666;
}

/* bottom */
.outrow {
  height: 21px;
  flex: none;
  background: #fff;
  padding-left: 4px;
  display: flex;
  align-items: flex-end;
}
.outtab {
  width: 53px;
  height: 19px;
  box-sizing: border-box;
  border: 1px solid #c8c8c8;
  border-bottom: 0;
  background: #f0f0f0;
  color: #777;
  font-size: 13px;
  line-height: 18px;
  padding-left: 4px;
}
.status {
  height: 25px;
  flex: none;
  box-sizing: border-box;
  display: flex;
  align-items: center;
  background: #eee;
  border-top: 1px solid #d6d6d6;
  border-bottom: 2px solid #a9cfc9;
}
.st-msg {
  flex: 1;
  padding-left: 9px;
  color: #6a6a6a;
  font-size: 13.500px;
  white-space: nowrap;
}
.st-msg small {
  font-size: 11px;
}
.st-pos {
  width: 306px;
  flex: none;
  display: flex;
  gap: 14px;
  font-size: 10.500px;
  color: #777;
}
.st-right {
  width: 462px;
  flex: none;
  display: flex;
  align-items: center;
  color: #222;
}
.st-cs {
  width: 68px;
  flex: none;
  font-size: 13.500px;
  white-space: nowrap;
}
.st-t {
  font-size: 11px;
  white-space: nowrap;
  flex: none;
}
.st-cs1 {
  width: 31px;
}
.st-probe {
  width: 124px;
  letter-spacing: -0.100px;
}
.st-sep {
  width: 1px;
  height: 18px;
  background: #999;
  flex: none;
}
.m4 {
  margin-left: 4px;
}
.m5 {
  margin-left: 5px;
}
.m6 {
  margin-left: 6px;
}
.m7 {
  margin-left: 7px;
}
.m8 {
  margin-left: 8px;
}
.m10 {
  margin-left: 10px;
}
.m13 {
  margin-left: 13px;
}

.ime {
  position: absolute;
  left: 1298px;
  top: 1007px;
  width: 185px;
  height: 25px;
  box-sizing: border-box;
  padding-left: 16px;
  background: #fff;
  border: 1px solid #cfe0f5;
  border-radius: 3px;
  display: grid;
  grid-template-columns: repeat(7, 24px);
  align-items: center;
  justify-items: center;
  color: #1478d4;
}
.ime-logo {
  position: absolute;
  left: -16px;
  top: -6px;
  width: 30px;
  height: 30px;
  background: #f4581c;
  border-radius: 4px;
  transform: rotate(-8deg);
  color: #fff;
  font: 700 26px/30px "Liberation Sans", sans-serif;
  text-align: center;
}
.ime-zh {
  font: 700 14px "Noto Sans CJK SC", sans-serif;
}
.ime-punc {
  font: 700 14px "Liberation Sans", sans-serif;
}
.watermark {
  position: absolute;
  right: 4px;
  top: 982px;
  font: 36px/46px "Liberation Sans", "Noto Sans CJK SC", sans-serif;
  color: rgba(255, 255, 255, 0.55);
  -webkit-text-stroke: 1px #b5b5b5;
  white-space: nowrap;
  pointer-events: none;
}
</style>
